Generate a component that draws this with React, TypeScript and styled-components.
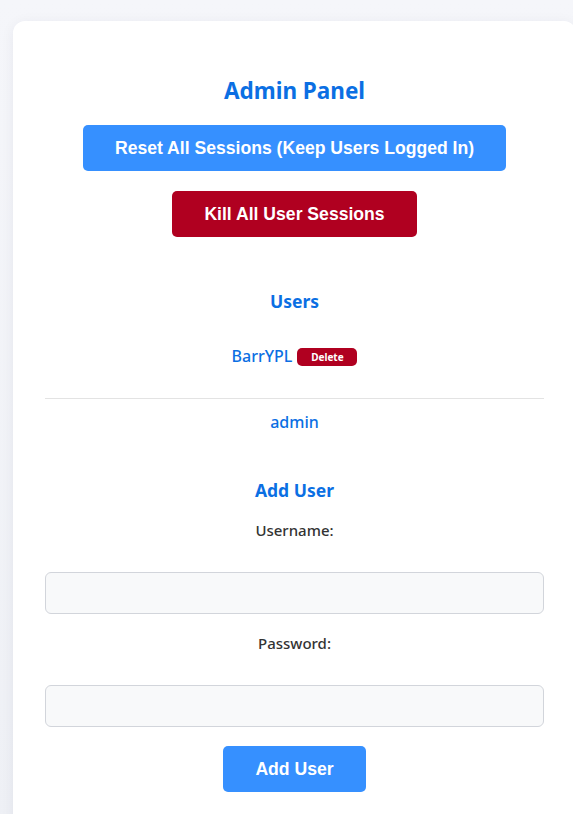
import styled, { createGlobalStyle } from 'styled-components';

const GlobalStyle = createGlobalStyle`
  html, body {
    margin: 0;
    padding: 0;
  }
  body {
    background: linear-gradient(180deg, #f5f6fa 0%, #eef0f5 100%);
    font-family: 'Noto Sans', 'Open Sans', sans-serif;
    min-height: 814px;
    overflow: hidden;
  }
`;

const colors = {
  blue: '#0b6fe3',
  button: '#3690ff',
  red: '#b00020',
  text: '#333333',
};

const Page = styled.div`
  padding: 21px 0 0 13px;
`;

const Card = styled.div`
  width: 499px;
  background: #ffffff;
  border-radius: 12px;
  padding: 54px 32px 32px;
  box-shadow: 0 2px 14px rgba(20, 30, 60, 0.06);
  display: flex;
  flex-direction: column;
  align-items: center;
`;

const Title = styled.h1`
  margin: 0 0 9px;
  font-size: 22.5px;
  font-weight: 700;
  color: ${colors.blue};
`;

const SectionTitle = styled.h2`
  margin: 0;
  font-size: 17.5px;
  font-weight: 700;
  color: ${colors.blue};
`;

const ActionButton = styled.button<{ $variant: 'primary' | 'danger' }>`
  background: ${p => (p.$variant === 'danger' ? colors.red : colors.button)};
  color: #ffffff;
  border: none;
  border-radius: 5px;
  font-family: 'Liberation Sans', Arial, sans-serif;
  font-size: 17.6px;
  font-weight: 700;
  height: 46px;
  padding: 0 32px;
  margin: 10px 0;
  cursor: pointer;
`;

const UserList = styled.ul`
  list-style: none;
  margin: 0;
  padding: 0;
  width: 100%;
`;

const UserRow = styled.li<{ $divider?: boolean }>`
  display: flex;
  justify-content: center;
  align-items: center;
  gap: 5px;
  padding: ${p => (p.$divider ? '10px 0 31px' : '12px 0')};
  border-bottom: ${p => (p.$divider ? '1px solid #e3e3e3' : 'none')};
`;

const UserName = styled.span`
  font-size: 16px;
  font-weight: 500;
  color: ${colors.blue};
`;

const DeleteButton = styled.button`
  background: ${colors.red};
  color: #ffffff;
  border: none;
  border-radius: 5px;
  font-family: 'Noto Sans', sans-serif;
  font-size: 10px;
  font-weight: 700;
  width: 60px;
  height: 18px;
  padding: 0;
  margin-top: 2px;
  cursor: pointer;
`;

const Form = styled.form`
  width: 100%;
  display: flex;
  flex-direction: column;
  align-items: center;
`;

const Label = styled.label`
  font-size: 15px;
  font-weight: 500;
  color: ${colors.text};
`;

const Input = styled.input`
  box-sizing: border-box;
  width: 100%;
  height: 42px;
  background: #f8f9fa;
  border: 1px solid #d2d5db;
  border-radius: 6px;
  padding: 0 12px;
  font-size: 15px;
`;

const Spacer = styled.div<{ $h: number }>`
  height: ${p => p.$h}px;
  flex-shrink: 0;
`;

export default function App() {
  return (
    <>
      <GlobalStyle />
      <Page>
        <Card>
          <Title>Admin Panel</Title>
          <ActionButton $variant="primary">Reset All Sessions (Keep Users Logged In)</ActionButton>
          <ActionButton $variant="danger">Kill All User Sessions</ActionButton>
          <Spacer $h={42} />
          <SectionTitle>Users</SectionTitle>
          <Spacer $h={22} />
          <UserList>
            <UserRow $divider>
              <UserName>BarrYPL</UserName>
              <DeleteButton>Delete</DeleteButton>
            </UserRow>
            <UserRow>
              <UserName>admin</UserName>
            </UserRow>
          </UserList>
          <Spacer $h={33} />
          <SectionTitle>Add User</SectionTitle>
          <Form>
            <Spacer $h={18} />
            <Label htmlFor="username">Username:</Label>
            <Spacer $h={32} />
            <Input id="username" type="text" />
            <Spacer $h={19} />
            <Label htmlFor="password">Password:</Label>
            <Spacer $h={32} />
            <Input id="password" type="password" />
            <Spacer $h={9} />
            <ActionButton $variant="primary" type="button">Add User</ActionButton>
          </Form>
        </Card>
      </Page>
    </>
  );
}
